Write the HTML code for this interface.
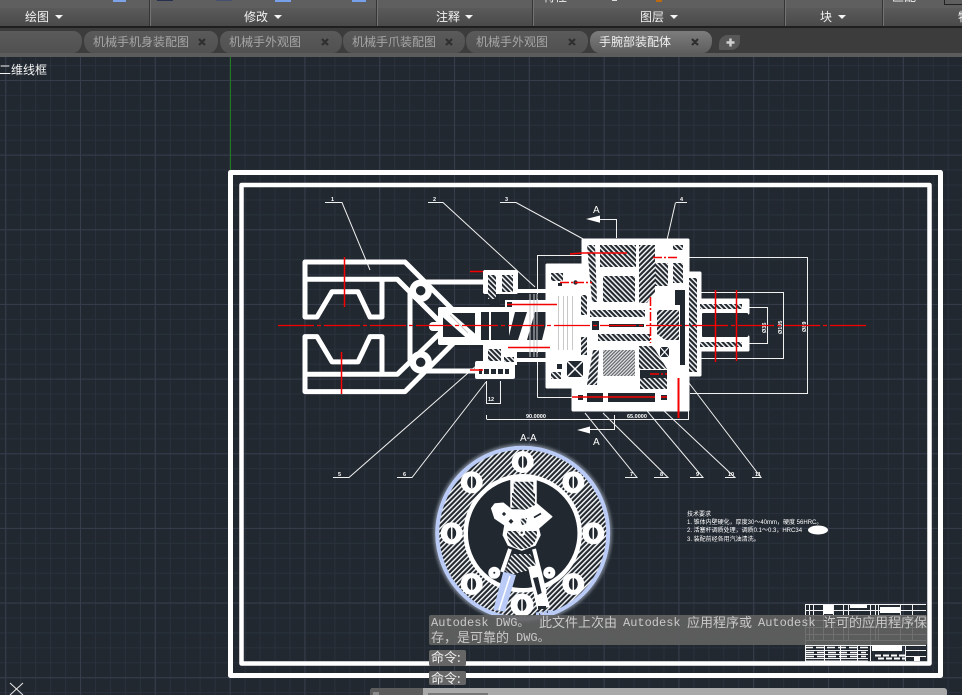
<!DOCTYPE html>
<html lang="zh"><head><meta charset="utf-8"><title>CAD</title>
<style>
html,body{margin:0;padding:0;background:#212830;}
#r{position:relative;width:962px;height:695px;overflow:hidden;background:#212830;font-family:"Liberation Sans","Noto Sans CJK SC",sans-serif;}
#r>*{position:absolute;}
.t{white-space:nowrap;font-size:12px;line-height:14px;}
.lab{color:#f2f2f2;top:10px;}
.tab{top:31px;height:22px;background:linear-gradient(#5a5a5a,#515151);border-radius:9px 9px 9px 9px/9px 9px 12px 12px;}
.tt{color:#a6a6a6;top:35px;}
.tri{width:0;height:0;border-left:4px solid transparent;border-right:4px solid transparent;border-top:4px solid #f4f4f4;top:15px;}
.sep{top:0;width:2px;height:26px;background:linear-gradient(90deg,#353535 50%,#737373 50%);}
.c{font-family:"Liberation Mono","Noto Sans CJK SC",monospace;font-size:12px;line-height:14px;color:#c9c9c9;white-space:nowrap;}
.z{font-family:"Noto Sans CJK SC",sans-serif;font-size:13px;}
svg text{font-family:"Liberation Sans","Noto Sans CJK SC",sans-serif;fill:#fff;}
</style></head><body><div id="r">

<svg style="left:0;top:0" width="962" height="695" viewBox="0 0 962 695">
<defs>
<pattern id="gm" x="5.2" y="5.35" width="14.96" height="14.93" patternUnits="userSpaceOnUse"><path d="M.5 0V15M0 .5H15" stroke="#2a313c" stroke-width="1" fill="none"/></pattern>
<pattern id="gM" x="5.2" y="5.35" width="74.8" height="74.65" patternUnits="userSpaceOnUse"><path d="M.5 0V75M0 .5H75" stroke="#373d4d" stroke-width="1" fill="none"/></pattern>
<pattern id="h1" width="3.6" height="4" patternUnits="userSpaceOnUse" patternTransform="rotate(45)"><rect width="4" height="4" fill="#212830"/><rect width="1.500" height="4" fill="#f4f4f4"/></pattern>
<pattern id="h2" width="3.6" height="4" patternUnits="userSpaceOnUse" patternTransform="rotate(-45)"><rect width="4" height="4" fill="#212830"/><rect width="1.500" height="4" fill="#f4f4f4"/></pattern>
<pattern id="h3" width="2.400" height="2.400" patternUnits="userSpaceOnUse" patternTransform="rotate(45)"><rect width="3" height="3" fill="#5f6368"/><rect width="1.200" height="3" fill="#e8e8e8"/></pattern>
<filter id="bl" x="-10%" y="-10%" width="120%" height="120%"><feGaussianBlur stdDeviation="1.500"/></filter>
<clipPath id="dk"><rect x="500" y="531" width="50" height="20"/></clipPath>
</defs>
<rect width="962" height="695" fill="#212830"/>
<rect width="962" height="695" fill="url(#gm)"/>
<rect width="962" height="695" fill="url(#gM)"/>
<path d="M230.500 57V170" stroke="#1d7d1d" stroke-width="1"/>

<!-- frames -->
<rect x="230.500" y="172.500" width="710" height="503" fill="none" stroke="#fff" stroke-width="5" stroke-linejoin="round"/>
<rect x="241.500" y="185" width="688" height="478.500" fill="none" stroke="#fff" stroke-width="4.500" stroke-linejoin="round"/>

<!-- thin leaders + dims -->
<g fill="none" stroke="#f0f0f0" stroke-width="1">
<path d="M325 202.500H342L370 270M428 202.500H443L535 287M500 202.500H516L585 240M676 202.500H687M675.500 202.500L667 240"/>
<path d="M625 477.500H637L585 413M654 477.500H668L603 413M690 477.500H703L632 393M725 477.500H735L645 393M752 477.500H761L689 383"/>
<path d="M333 477.500H349L476 366M397 477.500H412L486 382"/>
<path d="M537.500 397.500V255.500H583M688 257.500H807.500V393.500H690M537.500 397.500H575"/>
<path d="M697 292.500H783.500V358.500H697M748 307.500H767.500V343.500H748"/>
<path d="M486.500 381V403.500H500.500V381M486.500 419V415M486.500 419.500H688.500V408M600 219.500H616.500V238M590 429.500H614.500V415"/>
</g>
<g fill="#fff">
<path d="M586 219L600 215.500V222.700ZM577 430L590 426.500V433.500Z"/>
<text x="593" y="213" font-size="10">A</text><text x="593" y="445" font-size="10">A</text>
<text x="520" y="441" font-size="10">A-A</text>
<g font-size="5.500" font-weight="bold"><text x="331" y="201">1</text><text x="433" y="201">2</text><text x="505" y="201">3</text><text x="680" y="201">4</text>
<text x="338" y="476">5</text><text x="403" y="476">6</text><text x="630" y="476">7</text><text x="660" y="476">8</text><text x="696" y="476">9</text><text x="728" y="476">10</text><text x="755" y="476">11</text>
<text x="488" y="401">12</text><text x="526" y="418">90.0000</text><text x="627" y="418">65.0000</text></g>
<g font-size="5.500" font-weight="bold"><text transform="translate(766 333) rotate(-90)">Ø36</text><text transform="translate(782 334) rotate(-90)">Ø105</text><text transform="translate(806 332) rotate(-90)">Ø89</text></g>
</g>

<!-- gripper -->
<g fill="none" stroke="#fff" stroke-width="5" stroke-linejoin="round" stroke-linecap="round">
<path d="M453 310L423 280L405 262H305V317H317L332 291.700H358L370 317H382V280M305 279.300H397.300L438 320"/>
<path d="M453 343.600L423 373.600L405 391.600H305V336.600H317L332 361.900H358L370 336.600H382V373.600M305 374.300H397.300L440 333"/>
<path d="M410 293V360M423 282H483M423 371H475" />
<circle cx="420.700" cy="290.700" r="8" stroke-width="6.500" fill="#212830"/><circle cx="420.700" cy="362.300" r="8" stroke-width="6.500" fill="#212830"/>
</g>

<!-- center white mass -->
<g fill="#fff">
<rect x="438" y="307" width="120" height="38" rx="2"/>
<rect x="429" y="322" width="12" height="9" rx="4"/>
<rect x="483" y="270" width="35" height="24" rx="2"/>
<rect x="515" y="289" width="45" height="4"/>
<rect x="483" y="345" width="34" height="20"/>
<rect x="475" y="361" width="40" height="18" rx="2"/>
<rect x="505" y="300" width="50" height="9"/>
<rect x="505" y="343" width="50" height="9"/>
<rect x="515" y="358" width="45" height="4"/>
</g>
<g fill="#212830">
<rect x="443" y="313" width="32" height="24"/>
<rect x="481" y="312" width="8" height="28"/><rect x="491" y="312" width="18" height="28"/>
<path d="M515 312H527L518 340H508Z"/><path d="M535 312H549L542 340H527Z"/>
<rect x="490" y="302" width="10" height="5"/><rect x="507" y="302" width="5" height="5"/>
<rect x="517" y="294" width="40" height="5"/><rect x="518" y="353" width="40" height="5"/>
</g>
<path d="M446 314L472 337" stroke="#fff" stroke-width="9" fill="none" stroke-linecap="round"/>
<path d="M450 315L468 333" stroke="#c8c8c8" stroke-width="1" fill="none"/>
<rect x="488" y="275" width="8" height="24" fill="url(#h2)"/><rect x="502" y="275" width="11" height="17" fill="url(#h2)"/>
<rect x="488" y="349" width="13" height="12" fill="url(#h2)"/><rect x="504" y="357" width="10" height="5" fill="url(#h2)"/>
<rect x="479" y="369" width="30" height="5" fill="#212830"/>
<path d="M483 369V374M490 369V374M497 369V374M504 369V374" stroke="#fff" stroke-width="2"/>

<!-- right housing -->
<path d="M583 240H688V273H700V300H748V313H702V337H748V350H700V375H688V410H573V387H547V265H583Z" fill="#fff" stroke="#fff" stroke-width="3" stroke-linejoin="round"/>
<g fill="#212830">
<rect x="668" y="290" width="0" height="0"/>
<rect x="702" y="313" width="46" height="24" rx="1"/>
<rect x="578" y="395" width="5" height="5"/><rect x="587" y="393" width="16" height="9"/><rect x="608" y="393" width="47" height="9"/><rect x="661" y="395" width="6" height="5"/>
<rect x="592" y="321" width="7" height="9"/>
<rect x="609" y="324" width="35" height="3"/>
<rect x="675" y="290" width="10" height="15"/><rect x="680" y="305" width="5" height="60"/>
<rect x="640" y="370" width="27" height="8"/>
<rect x="557" y="364" width="5" height="5"/><rect x="558" y="283" width="4" height="3"/>
<rect x="548" y="295" width="6" height="6" opacity="0"/>
</g>
<g stroke="#c9c9c9" stroke-width="1" fill="none"><path d="M530 294V357M534 294V357M537 294V357M558.500 296V350M563.500 296V350M567.500 296V350M572.500 296V350"/></g>
<path d="M640 369.500H668" stroke="#fff" stroke-width="1"/>
<g>
<path d="M587 245H595L597 302H592Z" fill="url(#h2)"/>
<rect x="600" y="245" width="36" height="22" fill="url(#h2)"/>
<rect x="603" y="276" width="32" height="26" fill="url(#h2)"/>
<path d="M639 245H655V292L647 303H639Z" fill="url(#h1)"/>
<rect x="655" y="263" width="13" height="23" fill="url(#h2)"/>
<rect x="673" y="245" width="10" height="5" fill="url(#h2)"/><rect x="673" y="263" width="10" height="20" fill="url(#h2)"/>
<path d="M689 278H697V372H689Z" fill="url(#h2)"/>
<rect x="581" y="295" width="6" height="20" fill="url(#h2)"/><rect x="581" y="337" width="6" height="18" fill="url(#h1)"/>
<rect x="590" y="310" width="55" height="7" fill="url(#h2)"/>
<rect x="598" y="334" width="52" height="7" fill="url(#h2)"/>
<path d="M657 310H679V340H665L657 334Z" fill="url(#h1)"/>
<rect x="603" y="350" width="32" height="26" fill="url(#h3)"/>
<path d="M639 346H653L667 369H639Z" fill="url(#h2)"/>
<rect x="640" y="378" width="27" height="11" fill="url(#h2)"/>
<path d="M593 350H599L597 385H587Z" fill="url(#h1)"/>
<rect x="700" y="304" width="42" height="5" fill="url(#h2)"/><rect x="700" y="342" width="42" height="5" fill="url(#h2)"/>
<rect x="551" y="273" width="12" height="8" fill="url(#h2)"/><rect x="551" y="372" width="10" height="7" fill="url(#h2)"/>
</g>
<g>
<rect x="567" y="361" width="16" height="16" fill="#212830"/>
<path d="M567 361L583 377M583 361L567 377" stroke="#fff" stroke-width="1.500"/>
<rect x="660" y="347" width="9" height="10" fill="#212830"/>
<path d="M660 347L669 357M669 347L660 357" stroke="#fff" stroke-width="1.200"/>
<circle cx="575.500" cy="282.500" r="2.200" fill="#212830"/>
</g>

<!-- red lines -->
<g fill="none" stroke="#f40000" stroke-width="1.200">
<path d="M278 325.500H868" stroke-dasharray="36 3 4 3"/>
</g>
<g fill="none" stroke="#f50000" stroke-width="1.500">
<path d="M344.500 257V307M341.500 352V394M715.500 290V362M736.500 290V361" />
<path d="M650.500 297V343" stroke-dasharray="9 2 2 2"/>
<path d="M678.500 378V418" stroke-width="2"/>
<path d="M570 254L582 253H627M572 397H655M661 397H667M470 271.500H483M470 370H483M507 304.500H557M508 347.500H550" />
<path d="M650 374H667M560 282.500H592M653 257.500H678" stroke-dasharray="9 2 2 2"/>
</g>

<!-- section view -->
<circle cx="522.700" cy="533.300" r="87.500" fill="none" stroke="#8d96a6" stroke-width="3" filter="url(#bl)"/>
<circle cx="522.700" cy="533.300" r="71" fill="none" stroke="url(#h1)" stroke-width="30"/>
<circle cx="522.700" cy="533.300" r="85.500" fill="none" stroke="#b9cbf6" stroke-width="4"/>
<circle cx="522.700" cy="533.300" r="57" fill="#212830" stroke="#fff" stroke-width="4.500"/>
<g fill="#fff">
<circle cx="522.700" cy="462" r="11"/><circle cx="471.700" cy="482.300" r="11"/><circle cx="573.300" cy="482.300" r="11"/>
<circle cx="451.700" cy="533.300" r="11"/><circle cx="593.300" cy="533.300" r="11"/><circle cx="471.700" cy="584" r="11"/><circle cx="573.300" cy="584" r="11"/>
</g>
<g fill="#212830">
<ellipse cx="522.700" cy="462" rx="4.500" ry="6"/><ellipse cx="471.700" cy="482.300" rx="4.500" ry="6"/><ellipse cx="573.300" cy="482.300" rx="4.500" ry="6"/>
<ellipse cx="451.700" cy="533.300" rx="4.500" ry="6"/><ellipse cx="593.300" cy="533.300" rx="4.500" ry="6"/><ellipse cx="471.700" cy="584" rx="4.500" ry="6"/><ellipse cx="573.300" cy="584" rx="4.500" ry="6"/>
</g>
<path d="M522.700 456V468M471.700 476V488M573.300 476V488M451.700 527V539M593.300 527V539M471.700 578V590M573.300 578V590" stroke="#fff" stroke-width="1.500"/>

<!-- section inner -->
<path d="M512 480H535V506H512Z" fill="url(#h2)" stroke="#fff" stroke-width="3.500"/>
<path d="M491.700 508.300L495 504L503.300 503.300L511.700 510L525 510L536.700 504L551.700 516.700L538.300 528.300L540 535L535 545L521.700 550L508.300 545L503.300 535L505 525L495 518.300Z" fill="#fff" stroke="#fff" stroke-width="1.500" stroke-linejoin="round"/>
<path d="M512 493H535V505L525 510L512 507Z" fill="url(#h2)"/>
<circle cx="522" cy="534" r="15" fill="url(#h2)" clip-path="url(#dk)"/>
<rect x="502.500" y="512.500" width="3" height="3" fill="#212830" transform="rotate(45 504 514)"/>
<rect x="509.500" y="519.500" width="3.500" height="3.500" fill="#212830" transform="rotate(45 511 521)"/>
<path d="M520 519L527 518L526 524L522 525Z" fill="url(#h2)"/>
<path d="M534 517.500L541 513.500" stroke="#212830" stroke-width="1.800"/>
<circle cx="521.700" cy="532.700" r="3.500" fill="#fff"/><circle cx="521.700" cy="532.700" r="1.200" fill="#212830"/>
<path d="M510 549L502 572M534 549L545 593" stroke="#fff" stroke-width="4" fill="none"/>
<path d="M512 554H530L538 568L510 575L505 570Z" fill="url(#h2)"/>
<circle cx="494.300" cy="572.700" r="6" fill="#fff"/><circle cx="549.300" cy="572.700" r="6" fill="#fff"/>
<circle cx="494.300" cy="572.700" r="1" fill="#212830"/><circle cx="549.300" cy="572.700" r="1" fill="#212830"/>
<path d="M528 567L538 565L550 607L537 609Z" fill="#fff"/>
<path d="M533 578L538 577L541.700 593L537.700 595Z" fill="#212830"/>
<rect x="538" y="606" width="8" height="3" fill="#212830"/>
<circle cx="522" cy="605" r="11.500" fill="#fff"/><ellipse cx="522" cy="605" rx="4.500" ry="6" fill="#212830"/><path d="M522 599V611" stroke="#fff" stroke-width="1.500"/>
<path d="M503.300 571.700L516 575L505 611.700L493.300 610Z" fill="#b9cbf6"/>
<path d="M510 576L499 610" stroke="#fff" stroke-width="1.500"/>
<path d="M536 614L553 611" stroke="#b9cbf6" stroke-width="3" stroke-dasharray="3 1"/>

<!-- tech notes -->
<g font-size="6" fill="#e8e8e8">
<text x="687" y="516">技术要求</text>
<text x="687" y="524">1. 锥体内壁硬化，厚度30～40mm，硬度 56HRC。</text>
<text x="687" y="532">2. 活塞杆调质处理，调质0.1～0.3，HRC34</text>
<text x="687" y="541">3. 装配前经各用汽油清洗。</text>
</g>
<ellipse cx="818" cy="530" rx="10" ry="4.500" fill="#fff"/>

<!-- title block -->
<g fill="none" stroke="#f2f2f2" stroke-width="1">
<path d="M805 604.500H926M805.500 604V661M809.500 604V641M813.500 604V641M823.500 604V641M833.500 604V641M843.500 604V641M848.500 604V641M870.500 604V661M875.500 604V641M878.500 604V641M900.500 604V641M912.500 604V641"/>
<path d="M805 610.500H926M805 615.500H926M805 620.500H926M805 627.500H926M805 634.500H926M805 640.500H926"/>
<path d="M805 645.500H926M805 650.500H868M805 654.500H868M805 658.500H868M805 661H868M824.500 645V661M840.500 645V661M857.500 645V661M905.500 645V661M905 650.500H926M905 656.500H926"/>
</g>
<rect x="872" y="645" width="30" height="6" fill="#fff"/>
<rect x="823" y="605" width="10" height="9" fill="#fff"/>
<rect x="850" y="605" width="17" height="3" fill="#fff"/>
<rect x="880" y="607" width="20" height="6" fill="#fff"/>
<path d="M805 647.500H868M806 652.500H866M806 656.500H866" stroke="#fff" stroke-width="1.500" stroke-dasharray="8 3" fill="none"/>
<path d="M875 655.500H905M878 658.500H905" stroke="#fff" stroke-width="2" stroke-dasharray="6 2" fill="none"/>
<rect x="914" y="657" width="6" height="4" fill="#fff"/>
</svg>

<!-- Ribbon -->
<div style="left:0;top:0;width:962px;height:8px;background:#5f5f5f"></div>
<div style="left:0;top:8px;width:962px;height:18px;background:linear-gradient(#5a5a5a,#4a4a4a)"></div>
<div style="left:0;top:26px;width:962px;height:1.500px;background:#1f1f1f"></div>
<div style="left:0;top:27.500px;width:962px;height:25.500px;background:#3c3c3c"></div>
<div style="left:0;top:53px;width:962px;height:4px;background:#5c5c5c"></div>
<div class="sep" style="left:148.500px"></div><div class="sep" style="left:375.500px"></div><div class="sep" style="left:532px"></div><div class="sep" style="left:784px"></div><div class="sep" style="left:882px"></div>

<!-- top slivers -->
<div style="left:113px;top:0;width:13px;height:1.500px;background:#7ea2e8"></div>
<div style="left:157px;top:0;width:16px;height:1px;background:#28304f"></div>
<div style="left:216px;top:0;width:16px;height:1px;background:#445070"></div>
<div style="left:275px;top:0;width:16px;height:1.500px;background:#78a0ea"></div>
<div style="left:352px;top:0;width:14px;height:1.500px;background:#78a0ea"></div>
<div style="left:656px;top:0;width:6px;height:1.500px;background:#bb6a10"></div>
<div style="left:612px;top:0;width:5px;height:1px;background:#ddd"></div>
<div class="t" style="left:543px;top:-10px;color:#eee">特性</div>
<div class="t" style="left:892px;top:-10px;color:#eee">匹配</div>
<div style="left:944px;top:0;width:1px;height:4px;background:#222"></div><div style="left:944px;top:3.500px;width:18px;height:1px;background:#222"></div>

<div class="t lab" style="left:25px">绘图</div><div class="tri" style="left:55px"></div>
<div class="t lab" style="left:244px">修改</div><div class="tri" style="left:274px"></div>
<div class="t lab" style="left:436px">注释</div><div class="tri" style="left:465px"></div>
<div class="t lab" style="left:640px">图层</div><div class="tri" style="left:670px"></div>
<div class="t lab" style="left:820px">块</div><div class="tri" style="left:838px"></div>
<div class="t lab" style="left:958px">特</div>

<!-- tabs -->
<div class="tab" style="left:-10px;width:92px"></div>
<div class="tab" style="left:84px;width:134px"></div>
<div class="tab" style="left:220px;width:122px"></div>
<div class="tab" style="left:343px;width:122px"></div>
<div class="tab" style="left:466px;width:122px"></div>
<div class="tab" style="left:590px;width:122px;background:linear-gradient(#7d7d7d,#5e5e5e)"></div>
<div style="left:719px;top:35px;width:21px;height:15px;background:#575757;border-radius:9px 1px 9px 1px"></div>
<div class="t tt" style="left:93px">机械手机身装配图</div>
<div class="t tt" style="left:229px">机械手外观图</div>
<div class="t tt" style="left:352px">机械手爪装配图</div>
<div class="t tt" style="left:476px">机械手外观图</div>
<div class="t tt" style="left:599px;color:#f0f0f0">手腕部装配体</div>
<svg style="left:0;top:30px" width="962" height="24"><path d="M199 9L205 15M205 9L199 15M322 9L328 15M328 9L322 15M446 9L452 15M452 9L446 15M569 9L575 15M575 9L569 15M692 9L698 15M698 9L692 15" stroke="#2f2f2f" stroke-width="2.200" fill="none"/></svg>
<svg style="left:725px;top:37px" width="11" height="11"><path d="M5.500 1.500V9.500M1.500 5.500H9.500" stroke="#cfcfcf" stroke-width="2.500"/></svg>

<div class="t" style="left:-1px;top:63px;color:#f4f4f4">二维线框</div>

<!-- UCS -->
<svg style="left:8px;top:680px" width="18" height="15"><path d="M2 3L15 15M15 3L2 15" stroke="#e8e8e8" stroke-width="1" fill="none"/></svg>

<!-- command overlay -->
<div style="left:429px;top:615px;width:498px;height:30px;background:rgba(98,98,98,.9);border-radius:2px"></div>
<div class="c" style="left:431px;top:616px">Autodesk DWG。</div>
<div class="c z" style="left:539px;top:615px">此文件上次由</div>
<div class="c" style="left:623px;top:616px">Autodesk</div>
<div class="c z" style="left:687px;top:615px">应用程序或</div>
<div class="c" style="left:758px;top:616px">Autodesk</div>
<div class="c z" style="left:823px;top:615px">许可的应用程序保</div>
<div class="c z" style="left:431px;top:630px">存，是可靠的</div>
<div class="c" style="left:516px;top:631px">DWG。</div>
<div style="left:429px;top:650px;width:37px;height:15.500px;background:#666;border-radius:2px"></div>
<div style="left:429px;top:671px;width:37px;height:14px;background:#666;border-radius:2px"></div>
<div class="c z" style="left:431px;top:650px;color:#efefef">命令:</div>
<div class="c z" style="left:431px;top:670.500px;color:#efefef">命令:</div>

<!-- command bar -->
<div style="left:370px;top:688px;width:577px;height:7px;background:#a9a9a9;border-radius:3px 3px 0 0"></div>
<div style="left:370px;top:688px;width:53px;height:7px;background:#5d5d5d;border-radius:3px 0 0 0"></div>
<div style="left:373px;top:692px;width:6px;height:3px;background:#8a8a8a"></div>
<div style="left:428px;top:693px;width:60px;height:2px;background:#777"></div>

</div></body></html>
